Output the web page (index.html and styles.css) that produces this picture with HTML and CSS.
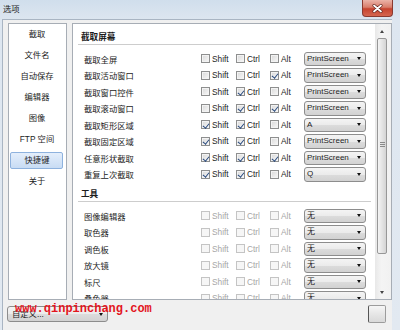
FILE: index.html
```html
<!DOCTYPE html>
<html lang="zh">
<head>
  <meta charset="UTF-8" />
  <title>选项</title>
  <link rel="stylesheet" href="styles.css">
</head>
<body>
  <div class="window">
    <div class="titlebar">
      <span class="title">选项</span>
      <span class="close">
        <svg width="11" height="9" viewBox="0 0 11 9"><path d="M2 1.5 L9 7.5 M9 1.5 L2 7.5" stroke="#5b1d16" stroke-width="3" stroke-linecap="round"/><path d="M2 1.5 L9 7.5 M9 1.5 L2 7.5" stroke="#fff" stroke-width="1.8" stroke-linecap="round"/></svg>
      </span>
    </div>

    <div class="client">
      <div class="main">
        <ul class="nav">
          <li>截取</li>
          <li>文件名</li>
          <li>自动保存</li>
          <li>编辑器</li>
          <li>图像</li>
          <li>FTP 空间</li>
          <li class="on">快捷键</li>
          <li>关于</li>
        </ul>

        <div class="panel">
          <div class="content">
            <h2>截取屏幕</h2>
            <div class="row">
              <span class="name">截取全屏</span>
              <span class="chk"><i class="box"></i>Shift</span>
              <span class="chk"><i class="box"></i>Ctrl</span>
              <span class="chk"><i class="box"></i>Alt</span>
              <span class="combo">PrintScreen</span>
            </div>
            <div class="row">
              <span class="name">截取活动窗口</span>
              <span class="chk"><i class="box"></i>Shift</span>
              <span class="chk"><i class="box"></i>Ctrl</span>
              <span class="chk"><i class="box on"></i>Alt</span>
              <span class="combo">PrintScreen</span>
            </div>
            <div class="row">
              <span class="name">截取窗口控件</span>
              <span class="chk"><i class="box"></i>Shift</span>
              <span class="chk"><i class="box on"></i>Ctrl</span>
              <span class="chk"><i class="box"></i>Alt</span>
              <span class="combo">PrintScreen</span>
            </div>
            <div class="row">
              <span class="name">截取滚动窗口</span>
              <span class="chk"><i class="box"></i>Shift</span>
              <span class="chk"><i class="box on"></i>Ctrl</span>
              <span class="chk"><i class="box on"></i>Alt</span>
              <span class="combo">PrintScreen</span>
            </div>
            <div class="row">
              <span class="name">截取矩形区域</span>
              <span class="chk"><i class="box on"></i>Shift</span>
              <span class="chk"><i class="box on"></i>Ctrl</span>
              <span class="chk"><i class="box"></i>Alt</span>
              <span class="combo">A</span>
            </div>
            <div class="row">
              <span class="name">截取固定区域</span>
              <span class="chk"><i class="box on"></i>Shift</span>
              <span class="chk"><i class="box on"></i>Ctrl</span>
              <span class="chk"><i class="box"></i>Alt</span>
              <span class="combo">PrintScreen</span>
            </div>
            <div class="row">
              <span class="name">任意形状截取</span>
              <span class="chk"><i class="box on"></i>Shift</span>
              <span class="chk"><i class="box on"></i>Ctrl</span>
              <span class="chk"><i class="box on"></i>Alt</span>
              <span class="combo">PrintScreen</span>
            </div>
            <div class="row">
              <span class="name">重复上次截取</span>
              <span class="chk"><i class="box on"></i>Shift</span>
              <span class="chk"><i class="box on"></i>Ctrl</span>
              <span class="chk"><i class="box"></i>Alt</span>
              <span class="combo">Q</span>
            </div>

            <h2>工具</h2>
            <div class="row off">
              <span class="name">图像编辑器</span>
              <span class="chk"><i class="box"></i>Shift</span>
              <span class="chk"><i class="box"></i>Ctrl</span>
              <span class="chk"><i class="box"></i>Alt</span>
              <span class="combo">无</span>
            </div>
            <div class="row off">
              <span class="name">取色器</span>
              <span class="chk"><i class="box"></i>Shift</span>
              <span class="chk"><i class="box"></i>Ctrl</span>
              <span class="chk"><i class="box"></i>Alt</span>
              <span class="combo">无</span>
            </div>
            <div class="row off">
              <span class="name">调色板</span>
              <span class="chk"><i class="box"></i>Shift</span>
              <span class="chk"><i class="box"></i>Ctrl</span>
              <span class="chk"><i class="box"></i>Alt</span>
              <span class="combo">无</span>
            </div>
            <div class="row off">
              <span class="name">放大镜</span>
              <span class="chk"><i class="box"></i>Shift</span>
              <span class="chk"><i class="box"></i>Ctrl</span>
              <span class="chk"><i class="box"></i>Alt</span>
              <span class="combo">无</span>
            </div>
            <div class="row off">
              <span class="name">标尺</span>
              <span class="chk"><i class="box"></i>Shift</span>
              <span class="chk"><i class="box"></i>Ctrl</span>
              <span class="chk"><i class="box"></i>Alt</span>
              <span class="combo">无</span>
            </div>
            <div class="row off">
              <span class="name">叠色器</span>
              <span class="chk"><i class="box"></i>Shift</span>
              <span class="chk"><i class="box"></i>Ctrl</span>
              <span class="chk"><i class="box"></i>Alt</span>
              <span class="combo">无</span>
            </div>
          </div>

          <div class="scrollbar">
            <span class="sb-btn up"></span>
            <span class="thumb"></span>
            <span class="sb-fill"></span>
            <span class="sb-btn down"></span>
          </div>
        </div>
      </div>

      <div class="footer">
        <span class="combo wide">自定义...</span>
        <span class="btn"></span>
      </div>
    </div>

    <div class="watermark">www.qinpinchang.com</div>
  </div>
</body>
</html>
```

FILE: styles.css
```css
* {
  box-sizing: border-box;
}
body {
  margin: 0;
  font-family: "Liberation Sans", "Noto Sans CJK SC", sans-serif;
  font-size: 8.3px;
  color: #1c1c1c;
  background: #dfe7f0;
}
.window {
  width: 400px;
  height: 330px;
  position: relative;
  overflow: hidden;
  background: linear-gradient(#d0deec, #dde6f0 20px, #e2e9f1);
}
.titlebar {
  height: 19px;
  display: flex;
  justify-content: space-between;
  align-items: flex-start;
}
.title {
  padding: 4.5px 0 0 3px;
  line-height: 9px;
}
.close {
  width: 31px;
  height: 17px;
  margin-right: 7px;
  border: 1px solid #8a3a30;
  border-top: none;
  border-radius: 0 0 4px 4px;
  background: linear-gradient(#ebb3a8, #d97e6c 45%, #c6432f 55%, #d5664f);
  display: flex;
  align-items: center;
  justify-content: center;
}
.client {
  margin-left: 2px;
  width: 390px;
  height: 311px;
  background: #f0f0f0;
  border-left: 1px solid #a9b5c3;
  border-top: 1px solid #a9b5c3;
}
.main {
  display: flex;
  gap: 5px;
  height: 280px;
  padding: 3px 0 0 5px;
}

/* lista da esquerda */
.nav {
  width: 59px;
  margin: 0;
  padding: 2px 3px 0 1px;
  list-style: none;
  background: #fff;
  border: 1px solid #a7adb5;
  display: flex;
  flex-direction: column;
  gap: 4px;
}
.nav li {
  height: 17px;
  line-height: 17px;
  text-align: center;
  padding-left: 1px;
}
.nav li.on {
  line-height: 15px;
  background: linear-gradient(#e4eefb, #c8dcf4);
  border: 1px solid #8eb2de;
  border-radius: 2px;
}

/* painel */
.panel {
  flex: 1;
  display: flex;
  background: #fff;
  border: 1px solid #a7adb5;
  overflow: hidden;
}
.content {
  flex: 1;
  overflow: hidden;
  padding: 1.5px 4px 0 5px;
}
.content h2 {
  margin: 0 0 6px;
  padding: 5px 0 0 3px;
  line-height: 13px;
  font-size: 8.6px;
  font-weight: bold;
  border-bottom: 1px solid #cdcdcd;
}
.row {
  display: grid;
  grid-template-columns: 117px 35px 34px 34px 62px;
  align-items: center;
  height: 16.5px;
  padding-left: 6px;
  white-space: nowrap;
}
.chk {
  display: flex;
  align-items: center;
  gap: 2px;
}
.box {
  width: 9px;
  height: 9px;
  position: relative;
  border: 1px solid #8e8f8f;
  background: linear-gradient(135deg, #d8d8d8, #f9f9f9);
  box-shadow: inset 0 0 0 1px #f3f3f3;
}
.box.on::after {
  content: "";
  position: absolute;
  left: 2.3px;
  top: 0.3px;
  width: 2.5px;
  height: 5px;
  border: solid #24467c;
  border-width: 0 1.3px 1.3px 0;
  transform: rotate(38deg);
}
.off .chk {
  color: #a6a6a6;
}
.off .box {
  border-color: #c4c4c4;
  background: #f6f6f6;
  box-shadow: none;
}
.combo {
  height: 14.5px;
  line-height: 12.5px;
  padding-left: 2px;
  font-size: 8px;
  position: relative;
  border: 1px solid #8d8d8d;
  border-radius: 3px;
  background: linear-gradient(#f4f4f4, #ebebeb 50%, #dcdcdc 50%, #d2d2d2);
}
.combo::after {
  content: "";
  position: absolute;
  right: 4px;
  top: 4.5px;
  border-left: 2.5px solid transparent;
  border-right: 2.5px solid transparent;
  border-top: 3px solid #111;
}

/* barra de scroll */
.scrollbar {
  width: 16px;
  display: flex;
  flex-direction: column;
  background: linear-gradient(90deg, #e8e8e8, #f4f4f4 40%, #f1f1f1);
}
.sb-btn {
  height: 14px;
  position: relative;
}
.sb-btn::after {
  content: "";
  position: absolute;
  left: 5px;
  top: 6px;
  border-left: 2.5px solid transparent;
  border-right: 2.5px solid transparent;
}
.sb-btn.up::after {
  border-bottom: 3px solid #444;
}
.sb-btn.down::after {
  border-top: 3px solid #444;
}
.thumb {
  height: 216px;
  margin: 0 4px 0 2px;
  position: relative;
  border: 1px solid #979797;
  border-radius: 2px;
  background: linear-gradient(90deg, #f4f4f4, #e4e4e4 50%, #d4d4d4);
}
.thumb::after {
  content: "";
  position: absolute;
  left: 1.5px;
  top: 103px;
  width: 5px;
  height: 6px;
  background: repeating-linear-gradient(#8a8a8a 0 1px, transparent 1px 2px);
}
.sb-fill {
  flex: 1;
}

/* rodapé */
.footer {
  height: 31px;
  display: flex;
  justify-content: space-between;
  align-items: flex-start;
  padding: 6px 6px 0 4px;
}
.combo.wide {
  width: 101px;
  height: 16px;
  line-height: 14px;
  padding-left: 4px;
  font-size: 8.3px;
}
.combo.wide::after {
  top: 5.5px;
}
.btn {
  width: 18px;
  height: 18px;
  margin-top: -1px;
  border: 1px solid #9c9c9c;
  border-left-color: #555;
  border-radius: 2px;
  background: linear-gradient(#f6f6f6, #e6e6e6 50%, #d9d9d9);
}
.watermark {
  position: absolute;
  left: 15px;
  top: 302px;
  font-family: "Liberation Mono", monospace;
  font-size: 12px;
  line-height: 14px;
  font-weight: bold;
  color: #e3161e;
}
```
